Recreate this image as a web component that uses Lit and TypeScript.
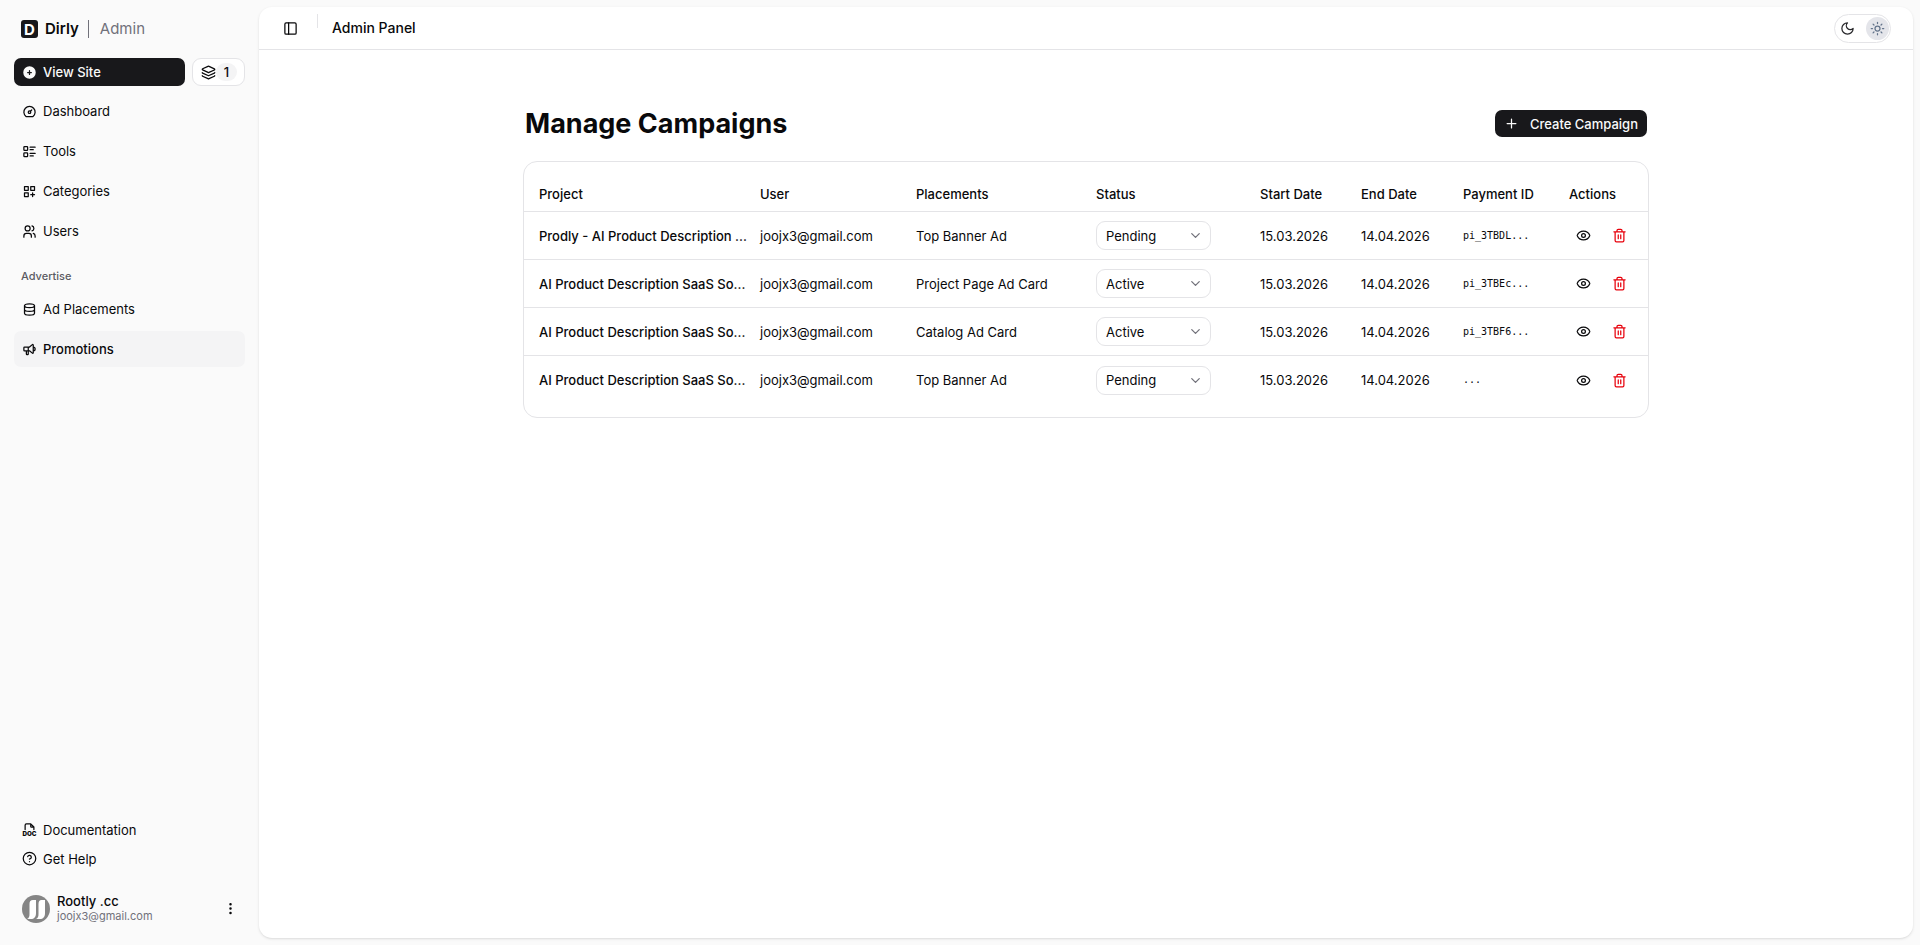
import { LitElement, html, css, svg, nothing } from "lit";
import type { TemplateResult } from "lit";
import { customElement, property, state } from "lit/decorators.js";
import { classMap } from "lit/directives/class-map.js";

const ICONS: Record<string, TemplateResult> = {
  dashboard: svg`<circle cx="12" cy="13" r="2"/><path d="M13.45 11.55l2.05-2.05M6.4 20a9 9 0 1 1 11.2 0z"/>`,
  tools: svg`<path d="M13 5h8M13 9h5M13 15h8M13 19h5"/><rect x="3" y="4" width="6" height="6" rx="1"/><rect x="3" y="14" width="6" height="6" rx="1"/>`,
  categories: svg`<path d="M4 4h6v6H4zM14 4h6v6h-6zM4 14h6v6H4zM14 17h6M17 14v6"/>`,
  users: svg`<circle cx="9" cy="7" r="4"/><path d="M3 21v-2a4 4 0 0 1 4-4h4a4 4 0 0 1 4 4v2M16 3.13a4 4 0 0 1 0 7.75M21 21v-2a4 4 0 0 0-3-3.85"/>`,
  database: svg`<ellipse cx="12" cy="6" rx="8" ry="3"/><path d="M4 6v6a8 3 0 0 0 16 0V6M4 12v6a8 3 0 0 0 16 0v-6"/>`,
  promo: svg`<path d="M18 8a3 3 0 0 1 0 6M10 8v11a1 1 0 0 1-1 1H8a1 1 0 0 1-1-1v-5M12 8l4.524-3.77A.9.9 0 0 1 18 4.922v12.156a.9.9 0 0 1-1.476.692L12 14H4a1 1 0 0 1-1-1V9a1 1 0 0 1 1-1h8"/>`,
  doc: svg`<path d="M14 3v4a1 1 0 0 0 1 1h4M5 12V5a2 2 0 0 1 2-2h7l5 5v4"/><text x="12" y="22" text-anchor="middle" font-size="10" font-weight="900" font-family="Inter, sans-serif" fill="currentColor" stroke="none">DOC</text>`,
  help: svg`<circle cx="12" cy="12" r="10"/><path d="M9.09 9a3 3 0 0 1 5.83 1c0 2-3 3-3 3M12 17h.01"/>`,
  layers: svg`<path d="M12.83 2.18a2 2 0 0 0-1.66 0L2.6 6.08a1 1 0 0 0 0 1.83l8.58 3.91a2 2 0 0 0 1.66 0l8.58-3.9a1 1 0 0 0 0-1.83z"/><path d="M2 12a1 1 0 0 0 .58.91l8.6 3.91a2 2 0 0 0 1.65 0l8.58-3.9A1 1 0 0 0 22 12M2 17a1 1 0 0 0 .58.91l8.6 3.91a2 2 0 0 0 1.65 0l8.58-3.9A1 1 0 0 0 22 17"/>`,
  panel: svg`<rect x="3" y="3" width="18" height="18" rx="2"/><path d="M9 3v18"/>`,
  plusCircle: svg`<path fill="currentColor" stroke="none" fill-rule="evenodd" d="M12 2a10 10 0 1 1 0 20 10 10 0 0 1 0-20zm0 6a1 1 0 0 0-1 1v2H9a1 1 0 0 0 0 2h2v2a1 1 0 0 0 2 0v-2h2a1 1 0 0 0 0-2h-2V9a1 1 0 0 0-1-1z"/>`,
  plus: svg`<path d="M5 12h14M12 5v14"/>`,
  moon: svg`<path d="M12 3a6 6 0 0 0 9 9 9 9 0 1 1-9-9z"/>`,
  sun: svg`<circle cx="12" cy="12" r="4"/><path d="M12 2v2M12 20v2M4.93 4.93l1.41 1.41M17.66 17.66l1.41 1.41M2 12h2M20 12h2M6.34 17.66l-1.41 1.41M19.07 4.93l-1.41 1.41"/>`,
  chevron: svg`<path d="m6 9 6 6 6-6"/>`,
  eye: svg`<path d="M2.06 12.35a1 1 0 0 1 0-.7 10.75 10.75 0 0 1 19.88 0 1 1 0 0 1 0 .7 10.75 10.75 0 0 1-19.88 0z"/><circle cx="12" cy="12" r="3"/>`,
  trash: svg`<path d="M3 6h18M19 6v14a2 2 0 0 1-2 2H7a2 2 0 0 1-2-2V6M8 6V4a2 2 0 0 1 2-2h4a2 2 0 0 1 2 2v2M10 11v6M14 11v6"/>`,
  dots: svg`<g fill="currentColor"><circle cx="12" cy="5" r="1"/><circle cx="12" cy="12" r="1"/><circle cx="12" cy="19" r="1"/></g>`,
};

const icon = (name: string, size = 15) => html`
  <svg width=${size} height=${size} viewBox="0 0 24 24" fill="none" stroke="currentColor"
    stroke-width="2" stroke-linecap="round" stroke-linejoin="round" aria-hidden="true">${ICONS[name]}</svg>`;

const base = css`
  * { box-sizing: border-box; }
  button, select { font: inherit; color: inherit; margin: 0; }
  button { cursor: pointer; }
  a { color: inherit; text-decoration: none; }
  svg { display: block; flex: none; }
`;

interface NavLink { icon: string; label: string; active?: boolean; }

@customElement("app-sidebar")
export class AppSidebar extends LitElement {
  static styles = [base, css`
    :host { display: flex; flex-direction: column; padding: 14px 14px 15px; }
    .brand { display: flex; align-items: center; height: 30px; padding: 0 7px; font-size: 15px; margin-bottom: 14px; }
    .name { font-weight: 600; margin-left: 7px; }
    .section { color: #71717a; border-left: 1px solid #71717a; margin-left: 9px; padding-left: 11px; line-height: 18px; }
    .actions { display: flex; gap: 7px; margin-bottom: 7px; }
    .site { flex: 1; display: flex; align-items: center; gap: 6px; height: 28px; padding: 0 8px; border-radius: 7px; background: #18181b; color: #fafafa; font-weight: 500; }
    .queue { display: flex; align-items: center; height: 28px; width: 53px; padding: 0 7px 0 8px; border: 1px solid #e4e4e7; border-radius: 9px; background: #fff; font-weight: 500; }
    .count { flex: 1; border-radius: 9px; background: #f4f4f5; line-height: 18px; text-align: center; }
    .links { display: flex; flex-direction: column; gap: 4px; }
    .link { display: flex; align-items: center; gap: 6px; height: 36px; padding: 0 8px; border-radius: 7px; }
    .link.active { background: #f4f4f5; font-weight: 500; }
    .links.compact { margin-top: auto; gap: 0; }
    .compact .link { height: 29px; }
    .label { margin: 0; padding: 17px 7px 5px; font-size: 11px; line-height: 20px; font-weight: 500; color: #5b5b62; }
    .user { display: flex; align-items: center; text-align: left; gap: 7px; margin-top: 14px; height: 43px; padding: 0 7px 0 8px; border: 0; background: none; }
    .who { flex: 1; display: grid; line-height: 15px; }
    .who strong { font-weight: 500; }
    .who small { font-size: 11px; line-height: 14px; color: #71717a; }
  `];

  @property({ attribute: false }) main: NavLink[] = [];
  @property({ attribute: false }) advertise: NavLink[] = [];
  @property({ attribute: false }) support: NavLink[] = [];

  private link(l: NavLink) {
    return html`<a href="#" class=${classMap({ link: true, active: !!l.active })}
      aria-current=${l.active ? "page" : nothing}>${icon(l.icon)}<span>${l.label}</span></a>`;
  }

  render() {
    return html`
      <a class="brand" href="#">
        <svg width="17" height="18" viewBox="0 0 17 18" aria-hidden="true">
          <rect width="17" height="18" rx="3" fill="#18181b"/>
          <text x="8.5" y="14.5" text-anchor="middle" font-family="Inter, sans-serif" font-size="15" font-weight="700" fill="#fff">D</text>
        </svg>
        <span class="name">Dirly</span><span class="section">Admin</span>
      </a>
      <div class="actions">
        <a class="site" href="#">${icon("plusCircle")}<span>View Site</span></a>
        <a class="queue" href="#" aria-label="Queue, 1 item">${icon("layers")}<span class="count">1</span></a>
      </div>
      <nav class="links" aria-label="Main">${this.main.map((l) => this.link(l))}</nav>
      <h2 class="label">Advertise</h2>
      <nav class="links" aria-label="Advertise">${this.advertise.map((l) => this.link(l))}</nav>
      <nav class="links compact" aria-label="Support">${this.support.map((l) => this.link(l))}</nav>
      <button class="user" type="button">
        <svg width="28" height="28" viewBox="0 0 28 28" aria-hidden="true">
          <circle cx="14" cy="14" r="14" fill="#858585"/>
          <path fill="#fff" d="M11 5h3v13c0 4-2 6-5 6H5c2-1 2.500-2.500 2.500-5V9c0-2.500 1-4 3.500-4z"/>
          <path fill="#fff" d="M19.500 5h3.500v13c0 4-2 6-5 6h-4c2-1 2.500-2.500 2.500-5V9c0-2.500 1-4 3-4z"/>
        </svg>
        <span class="who"><strong>Rootly .cc</strong><small>joojx3@gmail.com</small></span>
        ${icon("dots")}
      </button>`;
  }
}

interface Campaign { project: string; user: string; placement: string; status: string; start: string; end: string; payment: string; }

@customElement("campaign-table")
export class CampaignTable extends LitElement {
  static styles = [base, css`
    :host { display: block; border: 1px solid #e4e4e7; border-radius: 14px; padding: 14px 0 13px; overflow-x: auto; }
    table { width: 100%; min-width: 1124px; table-layout: fixed; border-collapse: separate; border-spacing: 0; }
    .c-project { width: 221px; } .c-user { width: 156px; } .c-place { width: 180px; } .c-status { width: 164px; }
    .c-start { width: 101px; } .c-end { width: 102px; } .c-pay { width: 106px; } .c-act { width: 94px; }
    th, td { padding: 0 0 0 15px; text-align: left; vertical-align: middle; white-space: nowrap; border-bottom: 1px solid #e4e4e7; }
    th { height: 36px; font-weight: 500; }
    td { height: 48px; }
    tbody tr:last-child td { border-bottom: 0; }
    .project { font-weight: 500; }
    .mono { font-family: "DejaVu Sans Mono", monospace; font-size: 10px; }
    .pick { position: relative; display: flex; align-items: center; width: 115px; }
    select { appearance: none; width: 100%; height: 29px; padding: 0 28px 0 9px; border: 1px solid #e4e4e7; border-radius: 9px; background: #fff; }
    .pick svg { position: absolute; right: 8px; color: #71717a; pointer-events: none; }
    .acts { display: flex; gap: 7px; }
    .act { display: grid; place-items: center; width: 29px; height: 29px; padding: 0; border: 0; border-radius: 7px; background: none; }
    .act.danger { color: #e7000b; }
  `];

  @property({ attribute: false }) rows: Campaign[] = [];

  render() {
    return html`
      <table>
        <colgroup>
          <col class="c-project"><col class="c-user"><col class="c-place"><col class="c-status">
          <col class="c-start"><col class="c-end"><col class="c-pay"><col class="c-act">
        </colgroup>
        <thead><tr>
          <th>Project</th><th>User</th><th>Placements</th><th>Status</th>
          <th>Start Date</th><th>End Date</th><th>Payment ID</th><th>Actions</th>
        </tr></thead>
        <tbody>${this.rows.map((r) => html`
          <tr>
            <td class="project">${r.project}</td>
            <td>${r.user}</td>
            <td>${r.placement}</td>
            <td><label class="pick">
              <select aria-label="Status">
                ${["Pending", "Active"].map((s) => html`<option ?selected=${s === r.status}>${s}</option>`)}
              </select>${icon("chevron")}
            </label></td>
            <td>${r.start}</td>
            <td>${r.end}</td>
            <td class="mono">${r.payment}</td>
            <td><div class="acts">
              <button class="act" type="button" aria-label="View">${icon("eye")}</button>
              <button class="act danger" type="button" aria-label="Delete">${icon("trash")}</button>
            </div></td>
          </tr>`)}
        </tbody>
      </table>`;
  }
}

@customElement("app-root")
export class AppRoot extends LitElement {
  static styles = [base, css`
    :host { display: grid; grid-template-columns: 259px minmax(0, 1fr); min-height: 100vh; background: #fafafa; color: #09090b; font: 400 13px/18px Inter, sans-serif; }
    .panel { margin: 7px 7px 7px 0; border-radius: 13px; background: #fff; box-shadow: 0 1px 3px rgb(0 0 0 / 10%), 0 1px 2px -1px rgb(0 0 0 / 10%); }
    .top { display: flex; align-items: center; height: 43px; padding: 0 22px 0 19px; border-bottom: 1px solid #e4e4e7; }
    .toggle { display: grid; place-items: center; width: 25px; height: 25px; padding: 0; border: 0; background: none; }
    .rule { align-self: flex-start; width: 1px; height: 14px; margin: 7px 14px 0; background: #e4e4e7; }
    .title { font-size: 14px; font-weight: 500; margin: 0; }
    .theme { display: flex; align-items: center; justify-content: space-between; width: 57px; height: 29px; margin-left: auto; padding: 0 1px; border: 1px solid #e4e4e7; border-radius: 15px; background: #fff; }
    .mode { display: grid; place-items: center; width: 23px; height: 23px; border-radius: 50%; color: #27272a; }
    .mode.on { background: #e4e5ea; color: #64748b; }
    .content { max-width: 1126px; margin: 0 auto; padding: 55px 0; }
    .head { display: flex; align-items: center; justify-content: space-between; padding: 0 2px; margin-bottom: 19px; }
    h1 { margin: 0; font-size: 27px; line-height: 37px; font-weight: 700; }
    .create { display: flex; align-items: center; gap: 11px; height: 27px; padding: 0 9px; border: 0; border-radius: 7px; background: #18181b; color: #fafafa; font-weight: 500; }
  `];

  @state() private dark = false;

  private readonly main: NavLink[] = [
    { icon: "dashboard", label: "Dashboard" },
    { icon: "tools", label: "Tools" },
    { icon: "categories", label: "Categories" },
    { icon: "users", label: "Users" },
  ];
  private readonly advertise: NavLink[] = [
    { icon: "database", label: "Ad Placements" },
    { icon: "promo", label: "Promotions", active: true },
  ];
  private readonly support: NavLink[] = [
    { icon: "doc", label: "Documentation" },
    { icon: "help", label: "Get Help" },
  ];
  private readonly rows: Campaign[] = [
    ["Prodly - AI Product Description ...", "Top Banner Ad", "Pending", "pi_3TBDL..."],
    ["AI Product Description SaaS So...", "Project Page Ad Card", "Active", "pi_3TBEc..."],
    ["AI Product Description SaaS So...", "Catalog Ad Card", "Active", "pi_3TBF6..."],
    ["AI Product Description SaaS So...", "Top Banner Ad", "Pending", "..."],
  ].map(([project, placement, status, payment]) => ({
    project, placement, status, payment, user: "joojx3@gmail.com", start: "15.03.2026", end: "14.04.2026",
  }));

  render() {
    return html`
      <app-sidebar .main=${this.main} .advertise=${this.advertise} .support=${this.support}></app-sidebar>
      <main class="panel">
        <header class="top">
          <button class="toggle" type="button" aria-label="Toggle sidebar">${icon("panel")}</button>
          <span class="rule"></span>
          <p class="title">Admin Panel</p>
          <button class="theme" type="button" aria-label="Toggle theme" @click=${() => (this.dark = !this.dark)}>
            <span class=${classMap({ mode: true, on: this.dark })}>${icon("moon")}</span>
            <span class=${classMap({ mode: true, on: !this.dark })}>${icon("sun")}</span>
          </button>
        </header>
        <section class="content">
          <div class="head">
            <h1>Manage Campaigns</h1>
            <button class="create" type="button">${icon("plus")}<span>Create Campaign</span></button>
          </div>
          <campaign-table .rows=${this.rows}></campaign-table>
        </section>
      </main>`;
  }
}
